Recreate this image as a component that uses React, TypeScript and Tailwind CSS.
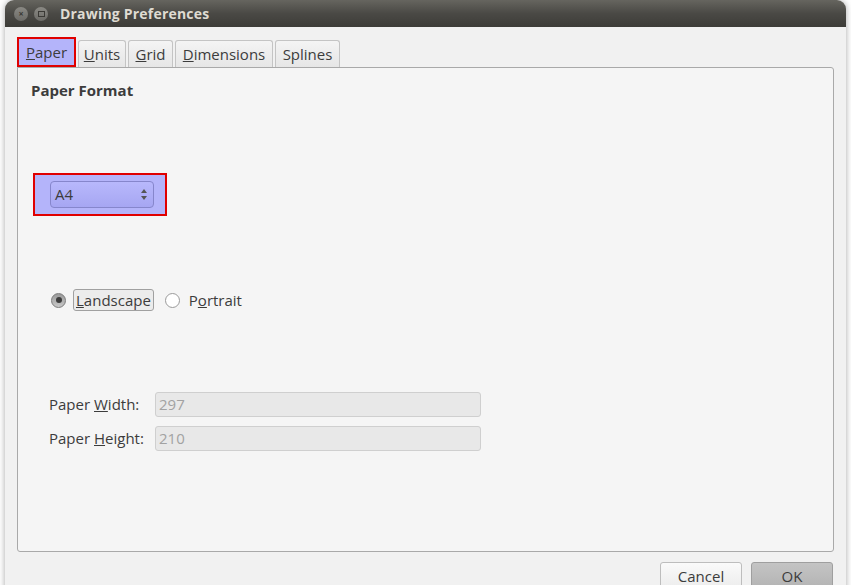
import type { ReactNode } from "react";

const font = { fontFamily: '"Open Sans", "Noto Sans", sans-serif' };

function Tab({ children, active, w }: { children: ReactNode; active?: boolean; w: string }) {
  if (active) {
    return (
      <div className={`${w} h-[30px] border-2 border-[#e00000] bg-[#b4b4fa] flex items-center justify-center text-[15px] text-[#3c3c3c]`}>
        {children}
      </div>
    );
  }
  return (
    <div className={`${w} h-[27px] mt-[3px] border border-b-0 border-[#c4c4c4] rounded-t-[3px] bg-gradient-to-b from-[#f4f4f4] to-[#e6e6e6] flex items-center justify-center text-[15px] text-[#3c3c3c]`}>
      {children}
    </div>
  );
}

function Field({ label, value }: { label: ReactNode; value: string }) {
  return (
    <div className="flex items-center h-[34px]">
      <div className="w-[106px] text-[15px] text-[#3c3c3c]">{label}</div>
      <div className="w-[326px] h-[25px] rounded-[3px] border border-[#cfcfcf] bg-[#e8e8e8] px-[3px] flex items-center text-[15px] text-[#a2a2a2]">
        {value}
      </div>
    </div>
  );
}

export default function App() {
  return (
    <div className="w-[851px] h-[585px] bg-white overflow-hidden" style={font}>
      <div className="mx-[5px] h-[600px] rounded-t-[9px] overflow-hidden bg-[#f1f1f1] shadow-[0_0_6px_rgba(0,0,0,0.35)] flex flex-col">
        {/* title bar */}
        <div className="h-[27px] shrink-0 bg-gradient-to-b from-[#66655f] via-[#4a4945] to-[#3d3c38] flex items-center pl-[9px] gap-[6px]">
          <div className="w-[14px] h-[14px] rounded-full bg-gradient-to-b from-[#8a8984] to-[#6c6b67] flex items-center justify-center text-[9px] leading-none text-[#3a3935] font-bold">
            ×
          </div>
          <div className="w-[14px] h-[14px] rounded-full bg-gradient-to-b from-[#8a8984] to-[#6c6b67] flex items-center justify-center">
            <div className="w-[7px] h-[6px] border border-[#3a3935]" />
          </div>
          <div className="ml-[6px] text-[14px] font-bold text-[#dfdbd2] tracking-[0.2px]">Drawing Preferences</div>
        </div>

        {/* body */}
        <div className="flex-1 px-[12px] pt-[10px]">
          <div className="flex items-end gap-[2px] h-[30px]">
            <Tab active w="w-[59px]">
              <span><u>P</u>aper</span>
            </Tab>
            <Tab w="w-[48px]">
              <span><u>U</u>nits</span>
            </Tab>
            <Tab w="w-[45px]">
              <span><u>G</u>rid</span>
            </Tab>
            <Tab w="w-[98px]">
              <span><u>D</u>imensions</span>
            </Tab>
            <Tab w="w-[65px]">
              <span>Splines</span>
            </Tab>
          </div>
          <div className="w-[817px] h-[485px] border border-[#a9a9a9] rounded-b-[3px] rounded-tr-[3px] bg-[#f5f5f5] pl-[13px] pt-[12px]">
            <div className="text-[15px] font-bold text-[#3c3c3c] leading-[20px]">Paper Format</div>

            <div className="mt-[73px] ml-[2px] w-[134px] h-[43px] border-2 border-[#e00000] bg-[#b4b4fa] flex items-center pl-[15px]">
              <div className="w-[104px] h-[27px] rounded-[4px] border border-[#8686cc] bg-gradient-to-b from-[#b8b8fc] to-[#a6a6f2] flex items-center justify-between pl-[4px] pr-[6px] text-[15px] text-[#3c3c3c]">
                <span>A4</span>
                <svg width="6" height="11" viewBox="0 0 6 11" className="fill-[#555]">
                  <path d="M3 0 L6 4 L0 4 Z" />
                  <path d="M0 7 L6 7 L3 11 Z" />
                </svg>
              </div>
            </div>

            <div className="mt-[72px] ml-[20px] flex items-center h-[24px] text-[15px] text-[#3c3c3c]">
              <div className="w-[15px] h-[15px] rounded-full border border-[#7a7a7a] bg-gradient-to-b from-[#9a9a9a] to-[#c8c8c8] flex items-center justify-center">
                <div className="w-[6px] h-[6px] rounded-full bg-[#3c3c3c]" />
              </div>
              <div className="ml-[7px] px-[2px] h-[22px] border border-[#a0a0a0] rounded-[3px] bg-[#ececec] flex items-center">
                <span><u>L</u>andscape</span>
              </div>
              <div className="ml-[11px] w-[15px] h-[15px] rounded-full border border-[#9a9a9a] bg-white" />
              <span className="ml-[9px]">P<u>o</u>rtrait</span>
            </div>

            <div className="mt-[75px] ml-[18px]">
              <Field label={<span>Paper <u>W</u>idth:</span>} value="297" />
              <Field label={<span>Paper <u>H</u>eight:</span>} value="210" />
            </div>
          </div>

          <div className="flex justify-end gap-[9px] pr-[1px] mt-[10px]">
            <div className="w-[82px] h-[28px] rounded-[3px] border border-[#bdbdbd] bg-gradient-to-b from-[#fafafa] to-[#ececec] flex items-center justify-center text-[15px] text-[#3c3c3c]">
              Cancel
            </div>
            <div className="w-[82px] h-[28px] rounded-[3px] border border-[#9f9f9f] bg-gradient-to-b from-[#c4c4c4] to-[#b3b3b3] flex items-center justify-center text-[15px] text-[#3c3c3c]">
              OK
            </div>
          </div>
        </div>
      </div>
    </div>
  );
}
